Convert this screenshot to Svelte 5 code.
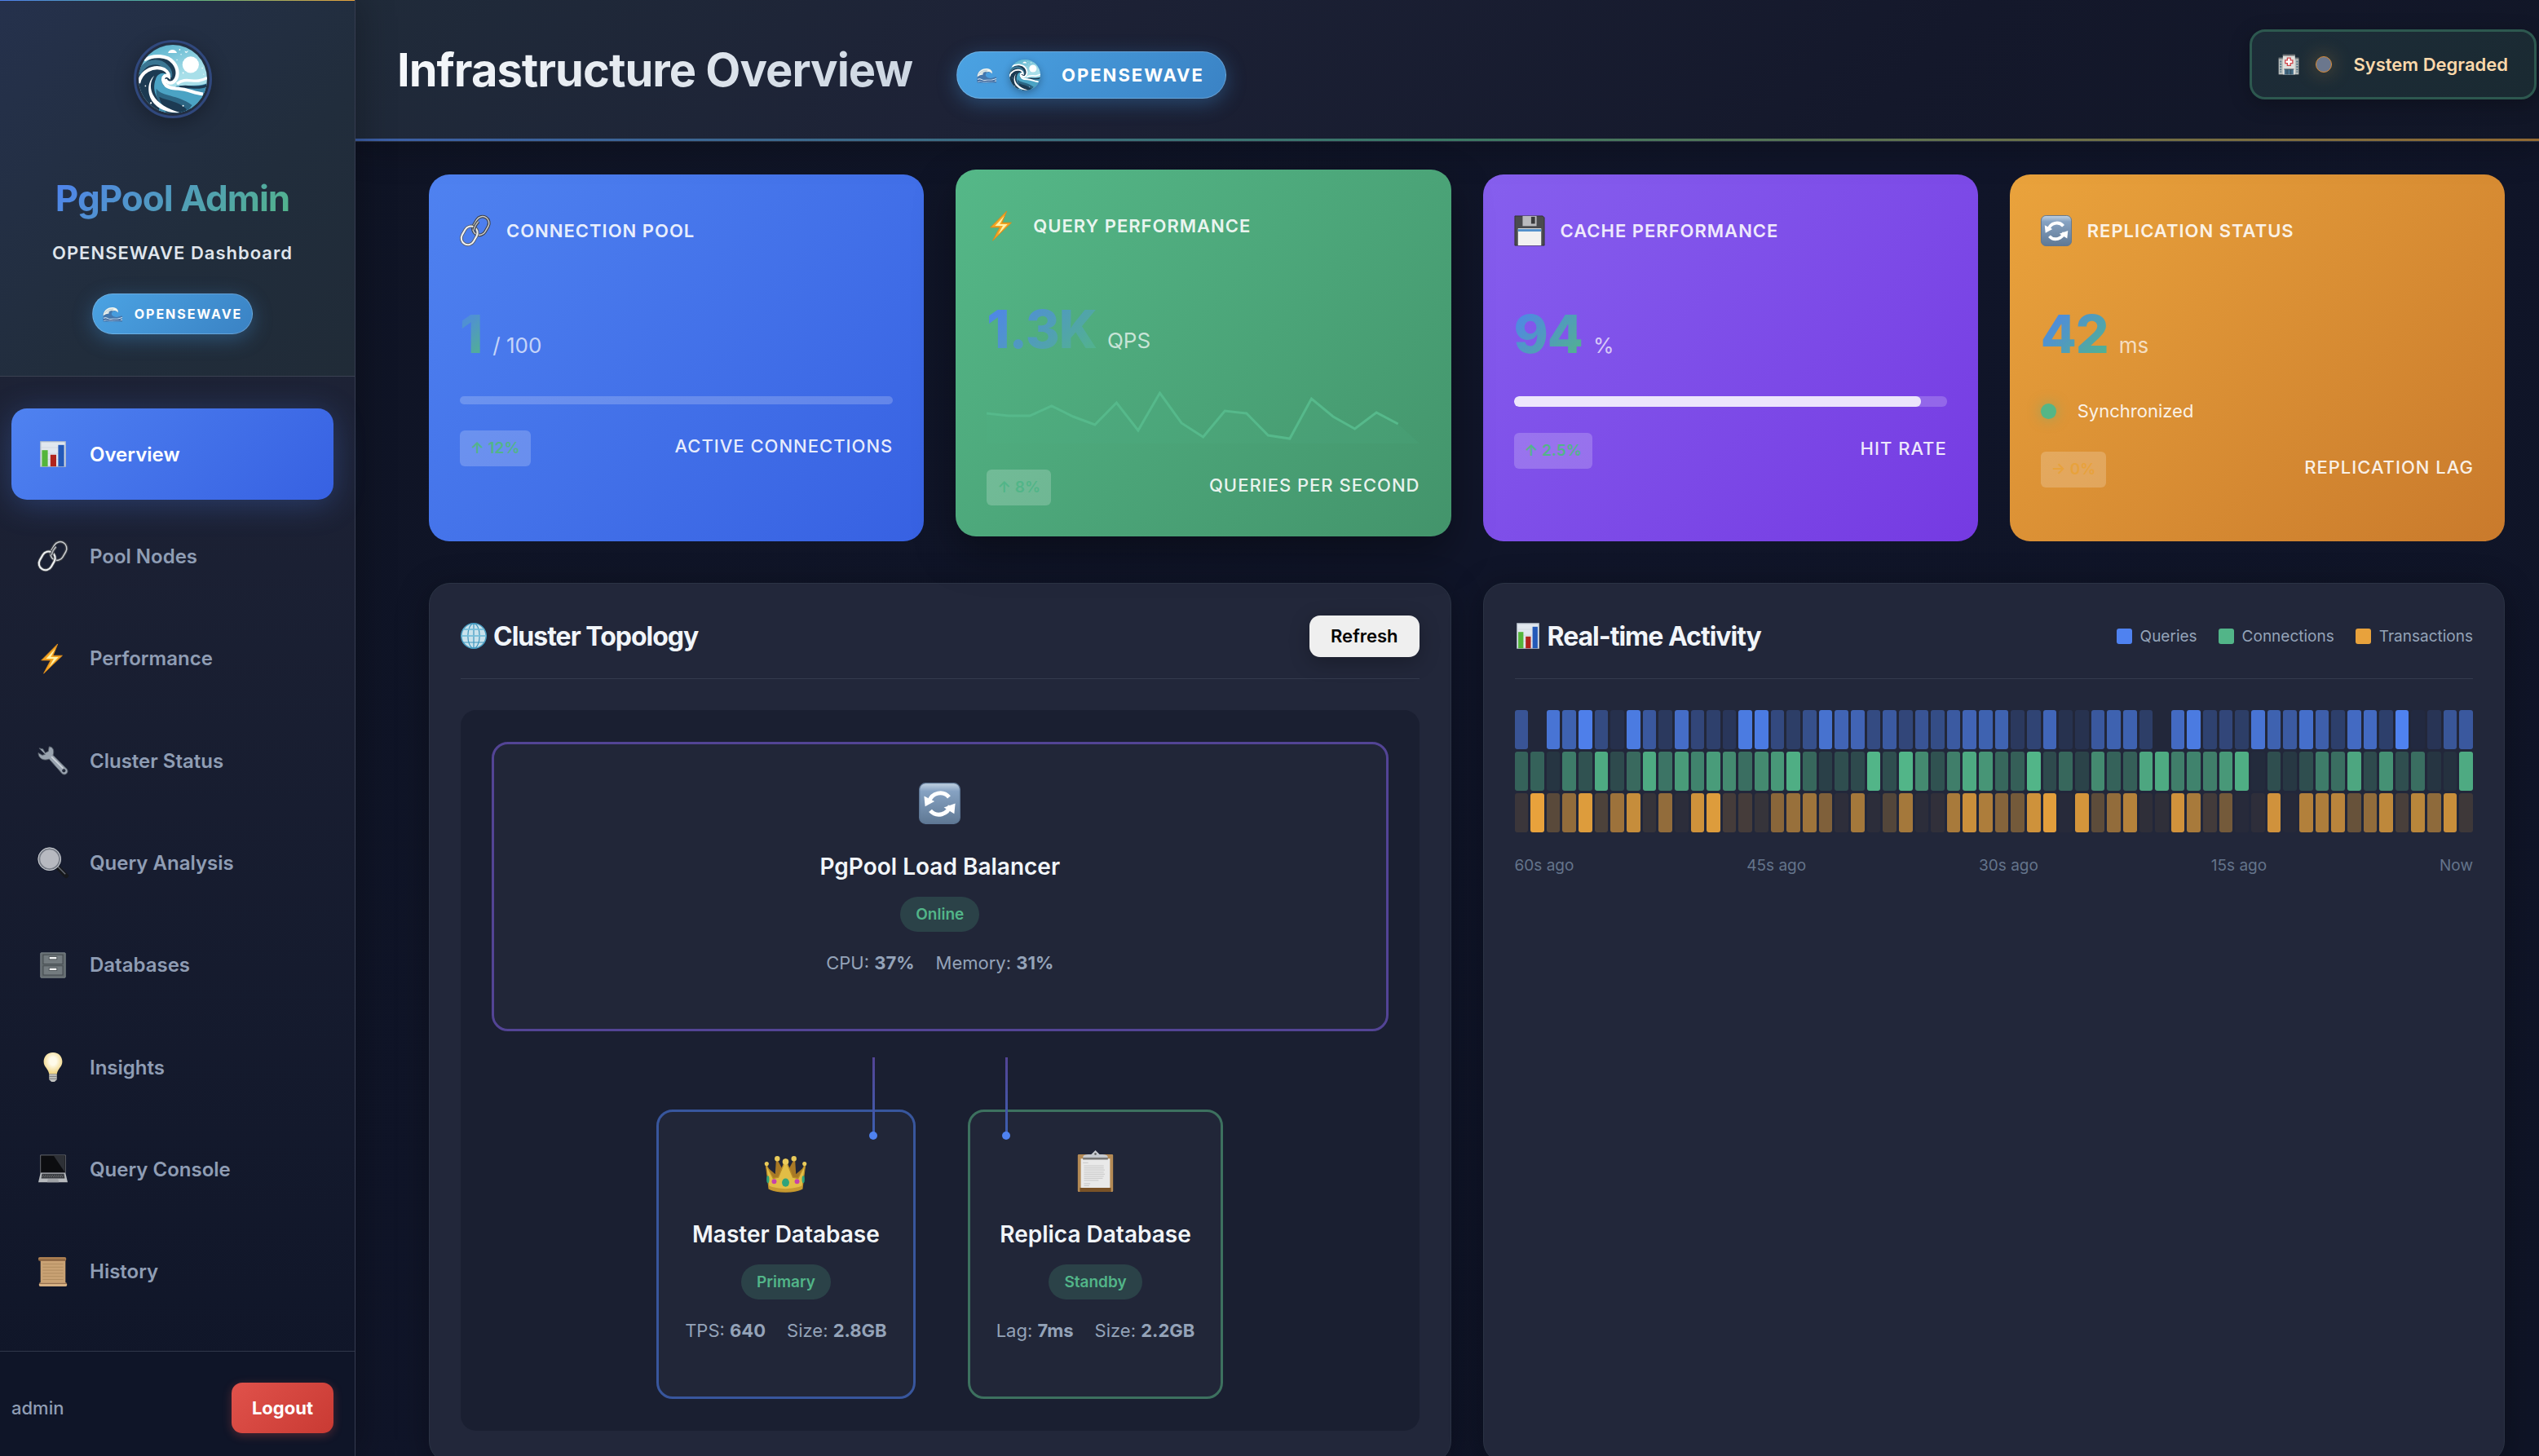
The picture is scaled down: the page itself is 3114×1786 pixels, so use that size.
<script>
  const nav = [
    { label: 'Overview', icon: 'chart', active: true },
    { label: 'Pool Nodes', icon: 'link' },
    { label: 'Performance', icon: 'bolt' },
    { label: 'Cluster Status', icon: 'wrench' },
    { label: 'Query Analysis', icon: 'lens' },
    { label: 'Databases', icon: 'cabinet' },
    { label: 'Insights', icon: 'bulb' },
    { label: 'Query Console', icon: 'laptop' },
    { label: 'History', icon: 'scroll' },
  ];

  const metrics = [
    { tone: 'blue', icon: 'link', title: 'Connection Pool', value: '1', unit: '/ 100', kind: 'bar', trend: '↑ 12%', label: 'Active Connections' },
    { tone: 'green', icon: 'bolt', title: 'Query Performance', value: '1.3K', unit: 'QPS', kind: 'spark', trend: '↑ 8%', label: 'Queries per second' },
    { tone: 'purple', icon: 'floppy', title: 'Cache Performance', value: '94', unit: '%', kind: 'fill', percent: 94, trend: '↑ 2.5%', label: 'Hit Rate' },
    { tone: 'orange', icon: 'cycle', title: 'Replication Status', value: '42', unit: 'ms', kind: 'sync', trend: '→ 0%', label: 'Replication Lag', flat: true },
  ];

  const spark = [27, 30, 30, 18, 31, 41, 14, 48, 2, 39, 56, 24, 27, 54, 58, 9, 31, 46, 26, 40];
  const step = 531 / 20;
  const sparkLine = spark.map((y, i) => `${(i * step).toFixed(1)},${y}`).join(' ');
  const sparkArea = `0,64 ${sparkLine} 531,64`;

  // Activity strength per second, in percent
  const activity = [
    { name: 'Queries', tone: 'q', cells: [50, 0, 85, 65, 97, 40, 10, 92, 55, 20, 78, 35, 28, 18, 92, 93, 38, 25, 45, 82, 68, 68, 40, 57, 35, 50, 42, 57, 68, 65, 66, 20, 32, 70, 12, 12, 55, 65, 65, 25, 0, 75, 92, 30, 35, 25, 85, 65, 57, 80, 62, 27, 75, 75, 27, 100, 3, 15, 52, 55] },
    { name: 'Connections', tone: 'c', cells: [42, 42, 10, 60, 30, 93, 25, 47, 93, 55, 82, 65, 83, 70, 50, 70, 80, 95, 45, 18, 28, 25, 100, 28, 100, 70, 30, 62, 93, 78, 45, 40, 100, 25, 45, 20, 70, 42, 40, 90, 93, 62, 65, 62, 80, 95, 3, 28, 12, 28, 60, 50, 90, 25, 75, 28, 50, 10, 7, 93] },
    { name: 'Transactions', tone: 't', cells: [13, 100, 28, 57, 95, 22, 62, 83, 10, 57, 5, 87, 95, 18, 18, 10, 52, 60, 63, 47, 6, 66, 5, 25, 66, 5, 8, 68, 85, 70, 50, 42, 87, 97, 3, 90, 30, 57, 74, 7, 7, 88, 68, 17, 42, 3, 6, 88, 2, 73, 70, 76, 35, 57, 79, 20, 77, 55, 84, 14] },
  ];
  const ticks = ['60s ago', '45s ago', '30s ago', '15s ago', 'Now'];
</script>

{#snippet logo()}
  <svg class="art" viewBox="0 0 100 100" aria-hidden="true">
    <g clip-path="url(#disc)">
      <rect width="100" height="100" fill="url(#sky)" />
      <circle cx="76" cy="29" r="12" fill="#fff" />
      <path d="M43 12c1-6 11-7 13 0z" fill="#fff" />
      <path d="M67 9l3 1 3-2-2 3-2 1z" fill="#fff" />
      <g fill="#fff"><circle cx="60" cy="7" r="1" /><circle cx="62" cy="14" r=".8" /><circle cx="56" cy="22" r=".8" /><circle cx="93" cy="34" r=".9" /><circle cx="65" cy="41" r="1" /><circle cx="95" cy="43" r=".7" /></g>
      <path d="M55 60c14-2 28 2 46-4v46H20z" fill="#3e8cae" />
      <path d="M56 57c14-12 26 2 44-9" fill="none" stroke="#fff" stroke-width="4" />
      <path d="M60 62c14-3 26 4 40-3" fill="none" stroke="#1c3a52" stroke-width="4" />
      <path d="M-2 50C2 20 34 8 50 26c8 9 8 20 2 28l-14 4-10 44H-4z" fill="#1c3a52" />
      <path d="M0 42c10-20 30-20 40-10 5 5 7 9 5 15" fill="none" stroke="#3a7592" stroke-width="7" />
      <path d="M8 22c14-8 34-7 43 4 8 10 7 22 0 28-5 3-11 1-12-4" fill="none" stroke="#fff" stroke-width="5" />
      <path d="M25 50c2-8 12-12 18-5-10 1-12 12-2 18 14 6 26 0 54 12L70 100 48 96C28 86 18 68 25 50z" fill="#4ba3c4" />
      <path d="M26 64c8 12 30 8 52 24l-10 14H44C32 92 24 78 26 64z" fill="#2c6583" />
      <path d="M30 76c12 6 28 6 40 18l-6 10H46C38 96 32 86 30 76z" fill="#1c3a52" />
      <path d="M0 56c4-18 20-24 32-22 8 2 12 7 12 12-4-3-9 0-8 6 2 10 12 12 22 12 14 1 22 6 36 8" fill="none" stroke="#fff" stroke-width="5" />
      <path d="M23 45c-6 8-7 18-2 28 7 13 22 21 40 26-20 2-38-8-44-22-5-12-2-26 6-32z" fill="#fff" />
      <g fill="#fff"><circle cx="10" cy="60" r="1" /><circle cx="18" cy="85" r="1.3" /><circle cx="65" cy="89" r="1.2" /></g>
    </g>
  </svg>
{/snippet}

{#snippet icon(name)}
  <svg class="art" viewBox="0 0 40 40" preserveAspectRatio="none" aria-hidden="true">
    {#if name === 'chart'}
      <rect x="1" y="1" width="38" height="38" fill="#e1e7ee" stroke="#b4bdc8" stroke-width="1.5" />
      <path d="M2 10h36M2 19h36M2 28h36" stroke="#cfd6df" />
      <rect x="3" y="14" width="9" height="25" fill="#54b53a" /><rect x="16" y="21" width="9" height="18" fill="#b0241c" /><rect x="28" y="6" width="9" height="33" fill="#2459b8" />
    {:else if name === 'link'}
      <g fill="none">
        <g transform="rotate(30 27 13)"><rect x="19" y="1" width="17" height="25" rx="8.5" stroke="#3f4247" stroke-width="4" /><rect x="19" y="1" width="17" height="25" rx="8.5" stroke="#c9ccd1" stroke-width="1.6" /></g>
        <g transform="rotate(30 13 26)"><rect x="4" y="14" width="17" height="25" rx="8.5" stroke="#55585d" stroke-width="4" /><rect x="4" y="14" width="17" height="25" rx="8.5" stroke="#eef0f2" stroke-width="2.2" /></g>
        <path d="M18 19c1-4 3-8 6-11" stroke="#3f4247" stroke-width="4" /><path d="M18 19c1-4 3-8 6-11" stroke="#b3b6bb" stroke-width="1.6" />
      </g>
    {:else if name === 'bolt'}
      <path d="M26 1L5 22h12L8 39l24-23H20z" fill="#f6a623" stroke="#d98a1c" /><path d="M23 7L11 20h10l-6 11 12-13H17z" fill="#fff2a8" />
    {:else if name === 'wrench'}
      <path d="M2 4l5 1 3 5 4-2 1-6C20 2 22 7 20 13l18 18c3 4-2 9-6 6L15 18C8 21 1 17 1 10l5 3 4-1" fill="#9aa4b0" stroke="#59616c" /><circle cx="34" cy="33" r="2.2" fill="#252b3b" />
      <path d="M18 15l15 15" stroke="#d4d9df" stroke-width="1.5" />
    {:else if name === 'lens'}
      <path d="M25 25l12 12" stroke="#16181c" stroke-width="6" stroke-linecap="round" /><path d="M26 25l10 10" stroke="#666b73" stroke-width="1.5" />
      <circle cx="15.500" cy="15.500" r="13.500" fill="#b7b9c0" stroke="#777c86" stroke-width="3" /><circle cx="15.500" cy="15.500" r="14.500" fill="none" stroke="#d5d8dd" />
    {:else if name === 'cabinet'}
      <rect x="1" y="1" width="38" height="38" rx="1" fill="#626a6e" stroke="#8d9598" />
      <g fill="#737b7f" stroke="#3d4346"><rect x="5" y="4" width="30" height="14" /><rect x="5" y="21" width="30" height="14" /></g>
      <g fill="#f3f5f5" stroke="#42484b"><rect x="14" y="7" width="12" height="4" /><rect x="14" y="24" width="12" height="4" /></g>
    {:else if name === 'bulb'}
      <path d="M20 1c8 0 12 6 12 12 0 7-6 9-7 16H15C14 22 8 20 8 13 8 7 12 1 20 1z" fill="url(#glow)" /><path d="M15 29h10v7l-3 3h-4l-3-3z" fill="#bfc0bd" /><path d="M15 32h10M15 35h10" stroke="#777" />
    {:else if name === 'laptop'}
      <path d="M3 2h34v23H3z" fill="#0c0d10" stroke="#6d7075" /><path d="M21 3h15v21z" fill="#2d3036" /><path d="M3 25h34l3 12H0z" fill="#b6b9bd" /><path d="M5 26h30l1 6H4z" fill="#34373d" /><path d="M6 28h28M5 30h30" stroke="#777" stroke-dasharray="2 1" /><path d="M13 33h14l1 4H12z" fill="#9fa2a6" />
    {:else if name === 'scroll'}
      <path d="M3 4h34v32H3z" fill="#c9a274" /><path d="M6 10h28M6 14h28M6 18h28M6 22h28M6 26h28M6 30h28" stroke="#b08b60" /><rect x="0" y="1" width="38" height="5" rx="2" fill="#a87c50" /><path d="M0 5h37" stroke="#6b4c30" /><rect x="1" y="34" width="38" height="5" rx="2" fill="#d6b184" /><path d="M1 35h38" stroke="#795638" />
    {:else if name === 'floppy'}
      <path d="M1 1h36l2 2v36H1z" fill="#4a4b4e" stroke="#333" /><rect x="11" y="1" width="18" height="13" fill="#b9babd" /><rect x="22" y="2" width="5" height="9" fill="#3a3b3d" /><rect x="5" y="17" width="30" height="22" fill="#f1f1f1" /><rect x="5" y="18" width="30" height="3" fill="#4f8ecb" />
    {:else if name === 'cycle'}
      <rect x=".5" y=".5" width="39" height="39" rx="6" fill="url(#steel)" stroke="#5d7694" />
      <g fill="none" stroke="#fff" stroke-width="4"><path d="M10 18a11 11 0 0 1 19-4" /><path d="M30 22a11 11 0 0 1-19 5" /></g><path d="M5 13l1 10 9-5z" fill="#fff" /><path d="M35 20l-1 10-10-6z" fill="#fff" />
    {:else if name === 'wave'}
      <path d="M1 39V27C-1 16 7 5 20 5c8 0 13 6 11 12-3-5-8-5-11-2-5 5 0 13 8 13 5 0 8-4 12-3v14z" fill="#4477ad" />
      <path d="M1 25C1 12 10 3 21 4c7 1 12 6 10 13-2-4-6-6-10-4-3-3-9 0-9 7-3-1-7 1-11 5z" fill="#f1f5ef" /><path d="M4 19c3-7 9-11 18-11M9 17c3-4 8-6 13-5" stroke="#7d9fb5" fill="none" />
      <path d="M2 31c6-5 9 4 15 2s10 1 15-1 5-2 8-3M2 36c8-3 10 2 18 0s12 1 20-2" fill="none" stroke="#dcebf5" stroke-width="2" />
      <path d="M1 34c6-3 12 3 18 1s10 1 18-1" fill="none" stroke="#234a87" stroke-width="2" />
    {:else if name === 'hospital'}
      <rect x="1" y="9" width="38" height="30" fill="#b7bcba" /><rect x="1" y="7" width="38" height="3" fill="#73787a" /><rect x="9" y="2" width="23" height="37" fill="#dedfdc" /><rect x="9" y="1" width="23" height="3" fill="#6c7072" />
      <path d="M17.500 8h6v4h4v6h-4v4h-6v-4h-4v-6h4z" fill="#fff" stroke="#cf4549" stroke-width="2" />
      <path d="M5 13v22M36 13v22" stroke="#4d7184" stroke-width="3" stroke-dasharray="3 2" /><rect x="12" y="29" width="17" height="10" fill="#456c86" /><path d="M11 29h19M17 30v9M24 30v9" stroke="#29343c" />
    {:else if name === 'globe'}
      <circle cx="20" cy="20" r="19" fill="#c9e2ec" stroke="#4a9cc0" stroke-width="2" /><g fill="none" stroke="#3f97be" stroke-width="1.500"><ellipse cx="20" cy="20" rx="9" ry="19" /><path d="M20 1v38M1 20h38M4 10h32M4 30h32" /></g><path d="M4 10h32M1 20h38" stroke="#7fc3de" stroke-width="2" />
    {:else if name === 'crown'}
      <path d="M1 15l9 8 1-16 7 13h4l7-13 1 16 9-8-4 22H5z" fill="#a87925" />
      <path d="M1 13l3 24c8 4 24 4 32 0l3-24-7 14-5-1-7-17-7 17-5 1z" fill="#e2bd45" stroke="#b98c28" /><path d="M4 34c8 4 24 4 32 0v3c-8 4-24 4-32 0z" fill="#c79a31" />
      <g fill="#eacb5b"><circle cx="1.800" cy="13" r="2" /><circle cx="12" cy="8" r="2.500" /><circle cx="20" cy="11" r="3" /><circle cx="28" cy="8" r="2.500" /><circle cx="38.200" cy="13" r="2" /></g>
      <ellipse cx="20" cy="31" rx="3.500" ry="4" fill="#2fa37b" /><circle cx="9" cy="30" r="2.300" fill="#c642ac" /><circle cx="31" cy="30" r="2.300" fill="#c642ac" /><ellipse cx="3" cy="28" rx="1.300" ry="3.500" fill="#2fa37b" /><ellipse cx="37" cy="28" rx="1.300" ry="3.500" fill="#2fa37b" />
    {:else if name === 'clipboard'}
      <rect x="3" y="4" width="34" height="36" rx="1" fill="#b48a55" /><rect x="5" y="36" width="30" height="4" fill="#7a5227" /><path d="M6 8h28v28H6z" fill="#e9e9e9" /><path d="M8 12h5M9 15h19M9 17h19M9 19h20M9 21h19M9 23h20M9 25h19M9 27h18M9 29h14M9 32h6M9 34h5" stroke="#cdcdcd" />
      <path d="M8 7c0-3 4-3 8-3l4-4 4 4c4 0 8 0 8 3z" fill="#c6cad0" /><rect x="8" y="7" width="24" height="2" fill="#777" /><circle cx="20" cy="3.500" r="1" fill="#555" />
    {/if}
  </svg>
{/snippet}

{#snippet node(cls, art, title, state, stats)}
  <article class="node {cls}">
    <span class="node-icon">{@render icon(art)}</span>
    <h3>{title}</h3>
    <span class="state">{state}</span>
    <p class="stats">
      {#each stats as [k, v]}<span>{k}: <strong>{v}</strong></span>{/each}
    </p>
  </article>
{/snippet}

<svg class="defs" width="0" height="0" aria-hidden="true">
  <defs>
    <clipPath id="disc"><circle cx="50" cy="50" r="50" /></clipPath>
    <linearGradient id="sky" x1="0" y1="0" x2=".4" y2="1"><stop offset="0" stop-color="#4aa9c8" /><stop offset=".6" stop-color="#a8dfe9" /></linearGradient>
    <radialGradient id="glow" cx=".5" cy=".4" r=".6"><stop offset=".3" stop-color="#fffbea" /><stop offset="1" stop-color="#efd27c" /></radialGradient>
    <linearGradient id="steel" x1="0" y1="0" x2="0" y2="1"><stop offset="0" stop-color="#c3d3e4" /><stop offset=".2" stop-color="#86a2c2" /><stop offset="1" stop-color="#5f7894" /></linearGradient>
  </defs>
</svg>

<div class="app">
  <aside class="sidebar">
    <div class="brand">
      <span class="brand-logo">{@render logo()}</span>
      <h2 class="brand-name">PgPool Admin</h2>
      <p class="brand-sub">OPENSEWAVE Dashboard</p>
      <span class="chip small"><span class="wave">{@render icon('wave')}</span>OPENSEWAVE</span>
    </div>
    <nav class="nav" aria-label="Main">
      {#each nav as item}
        <a href="#{item.icon}" class:active={item.active} aria-current={item.active ? 'page' : undefined}>
          <span class="nav-icon {item.icon}">{@render icon(item.icon)}</span>{item.label}
        </a>
      {/each}
    </nav>
    <div class="account">
      <span>admin</span>
      <button class="logout" type="button">Logout</button>
    </div>
  </aside>

  <main class="main">
    <header class="topbar">
      <div class="heading">
        <h1>Infrastructure Overview</h1>
        <span class="chip large"><span class="wave">{@render icon('wave')}</span><span class="chip-logo">{@render logo()}</span>OPENSEWAVE</span>
      </div>
      <div class="health" role="status">
        <span class="hospital">{@render icon('hospital')}</span>
        <span class="lamp"></span>
        System Degraded
      </div>
    </header>

    <div class="content">
      <section class="metrics">
        {#each metrics as m}
          <article class="card {m.tone}">
            <div class="card-head"><span class="card-icon">{@render icon(m.icon)}</span><h3>{m.title}</h3></div>
            <p class="reading"><span class="value">{m.value}</span><span class="unit">{m.unit}</span></p>
            {#if m.kind === 'bar'}
              <div class="track thin"></div>
            {:else if m.kind === 'fill'}
              <div class="track"><div class="fill" style="width: {m.percent}%"></div></div>
            {:else if m.kind === 'spark'}
              <svg class="spark" viewBox="0 0 531 64" preserveAspectRatio="none" aria-hidden="true">
                <polygon points={sparkArea} fill="#52b588" opacity=".12" />
                <polyline points={sparkLine} fill="none" stroke="#56b98b" stroke-width="3" />
              </svg>
            {:else}
              <div class="sync"><span class="sync-dot"></span>Synchronized</div>
            {/if}
            <div class="card-foot"><span class="trend" class:flat={m.flat}>{m.trend}</span><span class="label">{m.label}</span></div>
          </article>
        {/each}
      </section>

      <section class="panels">
        <article class="panel">
          <div class="panel-head">
            <h2><span class="title-icon">{@render icon('globe')}</span>Cluster Topology</h2>
            <button class="refresh" type="button">Refresh</button>
          </div>
          <div class="topology">
            {@render node('balancer', 'cycle', 'PgPool Load Balancer', 'Online', [['CPU', '37%'], ['Memory', '31%']])}
            <div class="wires"><span></span><span></span></div>
            <div class="databases">
              {@render node('master', 'crown', 'Master Database', 'Primary', [['TPS', '640'], ['Size', '2.8GB']])}
              {@render node('replica', 'clipboard', 'Replica Database', 'Standby', [['Lag', '7ms'], ['Size', '2.2GB']])}
            </div>
          </div>
        </article>

        <article class="panel">
          <div class="panel-head">
            <h2><span class="title-icon narrow">{@render icon('chart')}</span>Real-time Activity</h2>
            <ul class="legend">
              {#each activity as row}<li><span class="swatch {row.tone}"></span>{row.name}</li>{/each}
            </ul>
          </div>
          <div class="heat">
            {#each activity as row}
              <div class="heat-row">
                {#each row.cells as level}<span class="cell {row.tone}" style="opacity: {level / 100}"></span>{/each}
              </div>
            {/each}
          </div>
          <div class="ticks">{#each ticks as tick}<span>{tick}</span>{/each}</div>
        </article>
      </section>
    </div>
  </main>
</div>

<style>
  :global(body) { margin: 0; background: #101528; overflow: hidden; }
  .app, .app :global(*) { box-sizing: border-box; }
  h1, h2, h3, p, ul { margin: 0; padding: 0; }
  ul { list-style: none; }
  button { font: inherit; border: 0; cursor: pointer; }
  .defs { position: absolute; }
  .art { display: block; width: 100%; height: 100%; overflow: visible; }

  .app {
    display: flex; height: 100vh; overflow: hidden;
    font-family: Inter, "Liberation Sans", sans-serif; font-size: 22px; color: #f1f5f9;
    background: linear-gradient(135deg, #0f1424, #101529 50%, #0f1426);
  }

  .sidebar {
    flex: 0 0 436px; display: flex; flex-direction: column; position: relative; z-index: 2;
    background: linear-gradient(180deg, #22273a, #0f1528); border-right: 1px solid #363c50;
    box-shadow: 6px 0 40px rgba(0, 0, 0, .25);
  }
  .sidebar::before {
    content: ""; position: absolute; top: 0; left: 0; right: 0; height: 1px;
    background: linear-gradient(90deg, #4f82f0, #52b588, #e8a23c);
  }
  .brand {
    display: flex; flex-direction: column; align-items: center; padding: 49px 26px 51px 14px;
    background: linear-gradient(135deg, #25314c, #212d3c 60%, #202b37); border-bottom: 1px solid #3a4151;
  }
  .brand-logo {
    width: 96px; height: 96px; padding: 3px; border: 3px solid #30487d; border-radius: 50%;
    box-shadow: 0 6px 24px rgba(0, 0, 0, .3);
  }
  .brand-name {
    margin-top: 71px; font-size: 44px; line-height: 54px; font-weight: 700; letter-spacing: -1px; white-space: nowrap;
    background: linear-gradient(135deg, #4f82f0, #52b588); background-clip: text; color: transparent;
  }
  .brand-sub { margin-top: 21px; line-height: 38px; font-weight: 600; letter-spacing: 1px; color: #dfe5ec; }

  .chip {
    display: flex; align-items: center; color: #fff; font-weight: 700; letter-spacing: 2px; white-space: nowrap;
    border: 1px solid rgba(255, 255, 255, .2); border-radius: 32px;
    background: linear-gradient(135deg, #4ba3e3, #3a82c4); box-shadow: 0 6px 24px rgba(66, 153, 225, .35);
  }
  .small { height: 50px; margin-top: 31px; padding: 0 12px; gap: 15px; font-size: 16px; }
  .small .wave { width: 24px; height: 20px; }
  .large { height: 58px; padding: 0 26px 0 24px; font-size: 22px; }
  .large .wave { width: 24px; height: 20px; }
  .chip-logo { width: 38px; height: 38px; margin: 0 26px 0 16px; border-radius: 50%; box-shadow: 0 3px 10px rgba(0, 0, 0, .3); }

  .nav { flex: 1; display: flex; flex-direction: column; gap: 13px; padding: 39px 26px 41px 14px; }
  .nav a {
    flex: 1; display: flex; align-items: center; gap: 26px; padding: 0 32px; border-radius: 19px;
    font-size: 24px; font-weight: 600; color: #8f9db4; text-decoration: none;
  }
  .nav a.active { color: #fff; background: linear-gradient(135deg, #4f82f0, #3761e2); box-shadow: 0 6px 38px rgba(79, 130, 240, .3); }
  .nav-icon { width: 38px; height: 38px; }
  .nav-icon.chart, .nav-icon.cabinet { padding: 3px; }
  .nav-icon.laptop, .nav-icon.scroll { padding: 0 1px; }

  .account {
    display: flex; align-items: center; justify-content: space-between; padding: 38px 26px 28px 14px;
    border-top: 1px solid #30374a; background: #0f1528; font-weight: 500; color: #8f9db4;
  }
  .logout {
    height: 62px; padding: 0 25px; border-radius: 13px; color: #fff; font-weight: 700;
    background: linear-gradient(135deg, #e0524b, #c93a33); box-shadow: 0 3px 12px rgba(224, 82, 75, .3);
  }

  .main { flex: 1; min-width: 0; }
  .topbar {
    position: relative; display: flex; align-items: flex-start; justify-content: space-between;
    padding: 36px 3px 51px 51px; border-bottom: 1px solid #2a3040;
    background: linear-gradient(135deg, #202b3a, #1d2236 30%, #14182b 70%, #111627);
    box-shadow: 0 6px 40px rgba(0, 0, 0, .25);
  }
  .topbar::after {
    content: ""; position: absolute; left: 0; right: 0; bottom: 0; height: 3px;
    background: linear-gradient(90deg, #4f82f0, #52b588, #e8a23c); opacity: .6;
  }
  .heading { display: flex; align-items: flex-end; gap: 54px; padding-top: 16px; }
  h1 {
    font-size: 56px; line-height: 69px; font-weight: 700; letter-spacing: -1px; white-space: nowrap;
    background: linear-gradient(135deg, #f8fafc, #cbd5e1); background-clip: text; color: transparent;
  }
  .health {
    display: flex; align-items: center; height: 86px; padding: 0 32px; border: 3px solid #2d584f; border-radius: 19px;
    background: linear-gradient(135deg, #1d2c38, #1a2a32); font-weight: 600; color: #fbd9ab;
    box-shadow: 0 6px 24px rgba(0, 0, 0, .25); white-space: nowrap;
  }
  .hospital { width: 26px; height: 26px; }
  .lamp {
    width: 20px; height: 20px; margin: 0 26px 0 20px; border-radius: 50%; background: #6b778d; border: 1px solid #d98a35;
    box-shadow: 0 0 24px rgba(232, 162, 60, .4);
  }

  .content { padding: 40px 42px 40px 90px; }
  .metrics { display: grid; grid-template-columns: repeat(4, 1fr); gap: 39px; }
  .card { padding: 38px; border-radius: 25px; }
  .blue { background: linear-gradient(135deg, #4f82f0, #3761e2); }
  .green { background: linear-gradient(135deg, #55b888, #43946b); transform: translateY(-6px); box-shadow: 0 20px 50px rgba(0, 0, 0, .35); }
  .purple { background: linear-gradient(135deg, #865fee, #753ae2); }
  .orange { background: linear-gradient(135deg, #eaa33c, #c97a2c); }
  .card-head { display: flex; align-items: center; gap: 19px; height: 62px; }
  .card-icon { width: 38px; height: 38px; }
  .card h3 { font-size: 22px; font-weight: 600; letter-spacing: 1px; text-transform: uppercase; color: rgba(255, 255, 255, .9); }
  .reading { display: flex; align-items: baseline; gap: 13px; height: 64px; margin: 64px 0 44px; line-height: 64px; }
  .value {
    font-size: 64px; font-weight: 800; letter-spacing: -1px;
    background: linear-gradient(135deg, #4f82f0, #52b588); background-clip: text; color: transparent;
  }
  .unit { font-size: 26px; color: rgba(255, 255, 255, .7); }
  .track { height: 13px; border-radius: 6px; background: rgba(255, 255, 255, .2); overflow: hidden; }
  .thin { height: 10px; }
  .fill { height: 100%; border-radius: 6px; background: rgba(255, 255, 255, .82); }
  .spark { display: block; width: 100%; height: 64px; }
  .sync { display: flex; align-items: center; gap: 26px; height: 36px; color: rgba(255, 255, 255, .9); }
  .sync-dot { width: 19px; height: 19px; border-radius: 50%; background: #55b686; box-shadow: 0 0 16px rgba(85, 182, 134, .5); }
  .card-foot { display: flex; align-items: flex-start; justify-content: space-between; margin-top: 32px; }
  .trend {
    padding: 0 13px; line-height: 44px; border-radius: 6px; font-size: 19px; font-weight: 600;
    color: #52b588; background: rgba(255, 255, 255, .2);
  }
  .trend.flat { color: #e8a23c; }
  .label { line-height: 38px; font-weight: 500; letter-spacing: 1px; text-transform: uppercase; color: rgba(255, 255, 255, .9); }

  .panels { display: grid; grid-template-columns: 1fr 1fr; gap: 39px; margin-top: 51px; }
  .panel {
    padding: 38px; border: 1px solid #2b3344; border-radius: 26px; background: #22273a;
    box-shadow: 0 6px 40px rgba(0, 0, 0, .3);
  }
  .panel-head {
    display: flex; align-items: center; justify-content: space-between; height: 79px; padding-bottom: 26px;
    margin-bottom: 38px; border-bottom: 1px solid #353b4e;
  }
  .panel h2 { display: flex; align-items: center; gap: 8px; font-size: 32px; font-weight: 700; letter-spacing: -1px; white-space: nowrap; }
  .title-icon { width: 32px; height: 32px; }
  .narrow { padding: 0 2px; }
  .refresh {
    height: 51px; padding: 0 26px; border-radius: 13px; background: #efefef; color: #000; font-weight: 600;
    box-shadow: 0 6px 24px rgba(0, 0, 0, .25);
  }

  .topology { padding: 39px 38px; border-radius: 19px; background: #1a1f31; }
  .node {
    display: flex; flex-direction: column; align-items: center; padding: 47px 32px 63px; border: 3px solid; border-radius: 20px;
    background: #212638;
  }
  .balancer { border-color: #534495; }
  .master { border-color: #38569d; }
  .replica { border-color: #3d715f; }
  .node-icon { width: 51px; height: 51px; }
  .node h3 { margin: 30px 0 15px; font-size: 28px; line-height: 44px; font-weight: 600; white-space: nowrap; }
  .state {
    padding: 0 19px; border-radius: 22px; line-height: 43px; font-size: 19px; font-weight: 600;
    color: #52b588; background: #2b4248;
  }
  .stats { display: flex; gap: 26px; margin-top: 20px; line-height: 36px; color: #94a3b8; white-space: nowrap; }
  .wires { position: relative; z-index: 1; display: flex; justify-content: center; gap: 160px; height: 96px; padding-top: 32px; }
  .wires span {
    position: relative; width: 3px; height: 96px;
    background: linear-gradient(180deg, #534495, #3c5fb0);
  }
  .wires span::after {
    content: ""; position: absolute; left: -4px; bottom: -5px; width: 10px; height: 10px; border-radius: 50%; background: #4f82f0;
  }
  .databases { display: flex; justify-content: center; gap: 64px; }

  .legend { display: flex; gap: 26px; font-size: 19px; color: #94a3b8; }
  .legend li { display: flex; align-items: center; gap: 10px; }
  .swatch { width: 19px; height: 19px; border-radius: 3px; }
  .q { background: #4f82f0; }
  .c { background: #52b588; }
  .t { background: #e8a23c; }
  .heat { display: grid; gap: 3px; }
  .heat-row { display: grid; grid-template-columns: repeat(60, 1fr); gap: 3px; height: 48px; }
  .cell { border-radius: 3px; }
  .ticks { display: flex; justify-content: space-between; margin-top: 25px; line-height: 32px; font-size: 19px; color: #64748b; }
</style>
